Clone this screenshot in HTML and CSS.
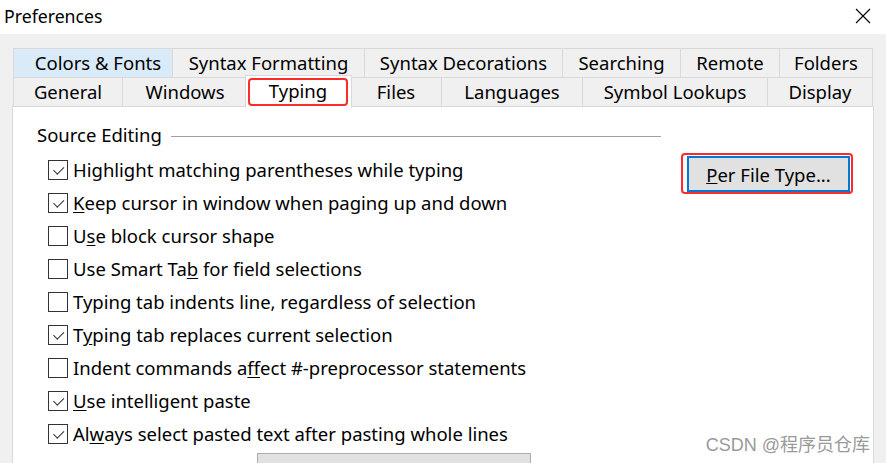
FILE: index.html
```html
<!DOCTYPE html>
<html>
<head>
<meta charset="utf-8">
<link rel="stylesheet" href="styles.css">
</head>
<body>
<div class="window">
  <div class="titlebar">
    <span class="title">Preferences</span>
    <svg class="close" width="16" height="16" viewBox="0 0 16 16"><path d="M1 1 L15 15 M15 1 L1 15" stroke="#000" stroke-width="1.1" fill="none"/></svg>
  </div>
  <div class="dialog">
    <div class="tabs row1">
      <div class="tab hot">Colors &amp; Fonts</div>
      <div class="tab">Syntax Formatting</div>
      <div class="tab">Syntax Decorations</div>
      <div class="tab">Searching</div>
      <div class="tab">Remote</div>
      <div class="tab">Folders</div>
    </div>
    <div class="tabs row2">
      <div class="tab">General</div>
      <div class="tab">Windows</div>
      <div class="tab selected"><span class="mark">Typing</span></div>
      <div class="tab">Files</div>
      <div class="tab">Languages</div>
      <div class="tab">Symbol Lookups</div>
      <div class="tab">Display</div>
    </div>
    <div class="panel">
      <div class="group-header">
        <span class="group-title">Source Editing</span>
        <span class="group-line"></span>
      </div>
      <div class="content">
        <ul class="options">
          <li class="opt"><span class="box checked"></span><span>Hi<u>g</u>hlight matching parentheses while typing</span></li>
          <li class="opt"><span class="box checked"></span><span><u>K</u>eep cursor in window when paging up and down</span></li>
          <li class="opt"><span class="box"></span><span>U<u>s</u>e block cursor shape</span></li>
          <li class="opt"><span class="box"></span><span>Use Smart Ta<u>b</u> for field selections</span></li>
          <li class="opt"><span class="box"></span><span>Typing tab indents line, regardless of selection</span></li>
          <li class="opt"><span class="box checked"></span><span>T<u>y</u>ping tab replaces current selection</span></li>
          <li class="opt"><span class="box"></span><span>Indent commands a<u>f</u>fect #-preprocessor statements</span></li>
          <li class="opt"><span class="box checked"></span><span><u>U</u>se intelligent paste</span></li>
          <li class="opt"><span class="box checked"></span><span>Al<u>w</u>ays select pasted text after pasting whole lines</span></li>
        </ul>
        <div class="side">
          <div class="annot">
            <button class="btn focused"><u>P</u>er File Type...</button>
          </div>
        </div>
      </div>
      <div class="bottom-row">
        <button class="btn wide">Auto-Indent Defaults...</button>
      </div>
      <div class="watermark">CSDN @程序员仓库</div>
    </div>
  </div>
</div>
</body>
</html>
```
FILE: styles.css
```css
html, body {
  margin: 0;
  padding: 0;
  width: 886px;
  height: 463px;
  overflow: hidden;
  background: #f0f0f0;
  font-family: "Noto Sans", "Noto Sans CJK SC", sans-serif;
  color: #000;
}
.window {
  width: 886px;
  height: 463px;
  overflow: hidden;
  position: relative;
}
.titlebar {
  height: 34px;
  background: #fff;
  display: flex;
  align-items: center;
  justify-content: space-between;
  padding: 0 15px 0 4px;
}
.title {
  font-size: 17.7px;
  line-height: 20px;
  margin-top: -3px;
}
.close {
  margin-top: -2px;
}
.dialog {
  padding: 14px 0 0 13px;
}
.tabs {
  display: grid;
  width: 859px;
  height: 29px;
}
.row1 {
  grid-template-columns: 159px 192px 198px 118px 99px 93px;
}
.row2 {
  grid-template-columns: 109px 125px 103px 91px 141px 185px 105px;
}
.tab {
  border: 1px solid #d9d9d9;
  margin-right: -1px;
  margin-bottom: -1px;
  background: #f0f0f0;
  font-size: 18.5px;
  line-height: 27px;
  text-align: center;
  white-space: nowrap;
}
.tab.hot {
  background: #d9eaf9;
  padding-left: 10px;
}
.tab.selected {
  background: #fff;
  position: relative;
  z-index: 2;
  margin: -2px -2px -2px -2px;
  border-bottom-color: #fff;
  display: flex;
  align-items: center;
  justify-content: center;
}
.mark {
  position: absolute;
  left: 2px;
  top: 2px;
  width: 96px;
  height: 24px;
  border: 2px solid #ff2b2b;
  border-radius: 4px;
  line-height: 22px;
}
.panel {
  position: relative;
  margin-left: -1px;
  width: 840px;
  height: 400px;
  background: #fff;
  border: 1px solid #d9d9d9;
  padding: 16px 20px 0 0;
}
.group-header {
  display: flex;
  align-items: center;
  height: 24px;
  padding-left: 24px;
}
.group-title {
  font-size: 18.5px;
  line-height: 24px;
}
.group-line {
  width: 490px;
  height: 1px;
  background: #a0a0a0;
  margin-left: 9px;
  margin-top: 2px;
}
.content {
  display: flex;
  justify-content: space-between;
  margin-top: 6px;
}
.options {
  list-style: none;
  margin: 0;
  padding: 0 0 0 35px;
}
.opt {
  display: flex;
  align-items: center;
  height: 33px;
  font-size: 18.5px;
  white-space: nowrap;
}
.opt u {
  text-underline-offset: 2px;
}
.box {
  width: 18px;
  height: 18px;
  border: 1px solid #333;
  margin-right: 5px;
  flex: none;
  position: relative;
  background: #fff;
}
.box.checked::after {
  content: "";
  position: absolute;
  left: 4px;
  top: 3px;
  width: 9px;
  height: 5px;
  border-left: 1.5px solid #333;
  border-bottom: 1.5px solid #333;
  transform: rotate(-45deg) translate(-1px, 2px);
}
.annot {
  border: 2px solid #ff2b2b;
  border-radius: 4px;
  padding: 1px 1px 0 4px;
}
.btn {
  font-family: inherit;
  font-size: 18.5px;
  color: #000;
  background: #e1e1e1;
  border: 1px solid #adadad;
  padding: 0;
  margin: 0;
  display: block;
}
.btn.focused {
  width: 163px;
  height: 36px;
  border: 2px solid #0078d7;
}
.bottom-row {
  padding: 3px 0 0 244px;
}
.btn.wide {
  width: 274px;
  height: 34px;
}
.watermark {
  position: absolute;
  right: 3px;
  top: 323px;
  font-family: "Liberation Sans", "Noto Sans CJK SC", sans-serif;
  font-size: 18px;
  color: #9a9a9a;
}
```
